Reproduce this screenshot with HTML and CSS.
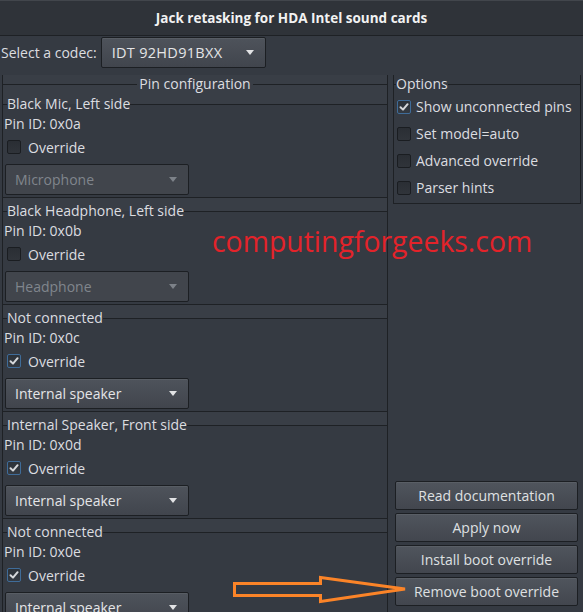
FILE: index.html
```html
<!DOCTYPE html>
<html>
<head>
<meta charset="utf-8">
<title>Jack retasking for HDA Intel sound cards</title>
<link rel="stylesheet" href="styles.css">
</head>
<body>
<div class="window">
  <header class="titlebar"><span class="title">Jack retasking for HDA Intel sound cards</span></header>

  <div class="codec-row">
    <span class="codec-label">Select a codec:</span>
    <div class="combo combo-codec"><span class="combo-text">IDT 92HD91BXX</span><span class="arrow"></span></div>
  </div>

  <div class="main">
    <section class="frame pins">
      <div class="frame-head centered"><span class="frame-label">Pin configuration</span></div>
      <div class="pin-list">
        <div class="pin">
          <div class="frame-head"><span class="frame-label">Black Mic, Left side</span></div>
          <div class="pin-id">Pin ID: 0x0a</div>
          <div class="check-row"><span class="check"></span><span>Override</span></div>
          <div class="combo combo-pin disabled"><span class="combo-text">Microphone</span><span class="arrow"></span></div>
        </div>
        <div class="pin">
          <div class="frame-head"><span class="frame-label">Black Headphone, Left side</span></div>
          <div class="pin-id">Pin ID: 0x0b</div>
          <div class="check-row"><span class="check"></span><span>Override</span></div>
          <div class="combo combo-pin disabled"><span class="combo-text">Headphone</span><span class="arrow"></span></div>
        </div>
        <div class="pin">
          <div class="frame-head"><span class="frame-label">Not connected</span></div>
          <div class="pin-id">Pin ID: 0x0c</div>
          <div class="check-row"><span class="check checked"><svg viewBox="0 0 12 12"><path d="M2.5 6.2 L5 8.6 L9.6 3.2"/></svg></span><span>Override</span></div>
          <div class="combo combo-pin"><span class="combo-text">Internal speaker</span><span class="arrow"></span></div>
        </div>
        <div class="pin">
          <div class="frame-head"><span class="frame-label">Internal Speaker, Front side</span></div>
          <div class="pin-id">Pin ID: 0x0d</div>
          <div class="check-row"><span class="check checked"><svg viewBox="0 0 12 12"><path d="M2.5 6.2 L5 8.6 L9.6 3.2"/></svg></span><span>Override</span></div>
          <div class="combo combo-pin"><span class="combo-text">Internal speaker</span><span class="arrow"></span></div>
        </div>
        <div class="pin">
          <div class="frame-head"><span class="frame-label">Not connected</span></div>
          <div class="pin-id">Pin ID: 0x0e</div>
          <div class="check-row"><span class="check checked"><svg viewBox="0 0 12 12"><path d="M2.5 6.2 L5 8.6 L9.6 3.2"/></svg></span><span>Override</span></div>
          <div class="combo combo-pin"><span class="combo-text">Internal speaker</span><span class="arrow"></span></div>
        </div>
      </div>
    </section>

    <aside class="side">
      <section class="frame options">
        <div class="frame-head short"><span class="frame-label">Options</span></div>
        <div class="opt-row"><span class="check checked"><svg viewBox="0 0 12 12"><path d="M2.5 6.2 L5 8.6 L9.6 3.2"/></svg></span><span>Show unconnected pins</span></div>
        <div class="opt-row"><span class="check"></span><span>Set model=auto</span></div>
        <div class="opt-row"><span class="check"></span><span>Advanced override</span></div>
        <div class="opt-row"><span class="check"></span><span>Parser hints</span></div>
      </section>
      <div class="buttons">
        <div class="button">Read documentation</div>
        <div class="button">Apply now</div>
        <div class="button">Install boot override</div>
        <div class="button">Remove boot override</div>
      </div>
    </aside>
  </div>

  <div class="watermark">computingforgeeks.com</div>
  <svg class="callout" viewBox="0 0 180 36" width="180" height="36">
    <polygon points="4.5,11.5 90.5,11.5 90.5,5.5 175,17 90.5,29.5 90.5,23.5 4.5,23.5"/>
  </svg>
</div>
</body>
</html>
```

FILE: styles.css
```css
* { box-sizing: border-box; }

html, body {
  margin: 0;
  padding: 0;
}

body {
  width: 583px;
  height: 612px;
  overflow: hidden;
  background: #353a42;
  font-family: "Open Sans", "Noto Sans", sans-serif;
  font-size: 14px;
  color: #dcdde0;
}

.window {
  position: relative;
  width: 583px;
  height: 612px;
  overflow: hidden;
}

/* title bar */
.titlebar {
  height: 36px;
  background: #2f3339;
  border-top: 1px solid #42464c;
  border-bottom: 1px solid #1e2125;
  display: flex;
  align-items: center;
  justify-content: center;
}

.title {
  font-weight: 700;
  font-size: 13.5px;
  color: #f2f2f2;
}

/* codec selector */
.codec-row {
  display: flex;
  align-items: center;
  gap: 4px;
  padding-left: 1px;
  margin-top: 1px;
  height: 31px;
}

.combo {
  display: flex;
  align-items: center;
  justify-content: space-between;
  height: 31px;
  border: 1px solid #1c1f23;
  border-radius: 2px;
  background: linear-gradient(#4e535b, #41454d);
  box-shadow: inset 0 1px rgba(255, 255, 255, 0.06);
  color: #e4e5e7;
}

.combo .arrow {
  width: 0;
  height: 0;
  border-left: 4.5px solid transparent;
  border-right: 4.5px solid transparent;
  border-top: 5px solid #e2e3e5;
}

.combo-codec {
  width: 165px;
  padding: 0 11px 0 10px;
  font-size: 14.5px;
  letter-spacing: 0.3px;
}

.combo-pin {
  width: 184px;
  margin: 4px 0 0 2px;
  padding: 0 11px 0 9px;
}

.combo.disabled {
  background: #41454c;
  box-shadow: none;
  color: #80858c;
}

.combo.disabled .arrow {
  border-top-color: #7d8289;
}

/* main layout */
.main {
  display: flex;
  gap: 5px;
  margin-top: 7px;
  height: 537px;
}

.frame {
  border-left: 1px solid #1e2125;
  border-right: 1px solid #1e2125;
}

.frame-head {
  display: flex;
  align-items: center;
  height: 20px;
  line-height: 20px;
}

.frame-head::before,
.frame-head::after {
  content: "";
  border-top: 1px solid #1e2125;
}

.frame-head::before { width: 4px; }
.frame-head::after { flex: 1; }

.frame-head.centered { height: 18px; }
.frame-head.centered::before { flex: 1; width: auto; }
.frame-head.centered .frame-label { padding: 0 2px; }

.frame-label {
  white-space: nowrap;
  color: #dcdde0;
}

/* pin configuration */
.pins {
  margin-left: 2px;
  width: 386px;
  height: 560px;
  background: #393e46;
}

.pin-list {
  display: flex;
  flex-direction: column;
  gap: 3px;
  padding-top: 1px;
}

.pin {
  background: #353a42;
  border-bottom: 1px solid #1e2125;
  padding-bottom: 2px;
}

.pin .frame-head {
  background: linear-gradient(#393e46 50%, #353a42 50%);
}

.pin-id {
  height: 20px;
  line-height: 20px;
  padding-left: 1px;
}

.check-row {
  display: flex;
  align-items: center;
  gap: 7px;
  height: 26px;
  padding-left: 4px;
}

.check {
  flex: none;
  width: 14px;
  height: 14px;
  border: 1px solid #1a1d21;
  border-radius: 2px;
  background: linear-gradient(#2a2e34, #30343a);
  display: flex;
  align-items: center;
  justify-content: center;
}

.check.checked {
  border-color: #3f6c99;
  background: linear-gradient(#2c3239, #343a42);
}

.check svg {
  width: 12px;
  height: 12px;
}

.check path {
  fill: none;
  stroke: #d6d8db;
  stroke-width: 2;
  stroke-linecap: round;
  stroke-linejoin: round;
}

/* right side */
.side {
  width: 188px;
  display: flex;
  flex-direction: column;
  justify-content: space-between;
  padding-bottom: 6px;
}

.options {
  border-bottom: 1px solid #1e2125;
  padding-bottom: 2px;
}

.options .frame-head {
  height: 18px;
}

.options .frame-head::before { width: 2px; }

.opt-row {
  display: flex;
  align-items: center;
  gap: 5px;
  height: 27px;
  padding-left: 3px;
  white-space: nowrap;
}

.buttons {
  display: flex;
  flex-direction: column;
  gap: 3px;
  padding-left: 2px;
}

.button {
  width: 183px;
  height: 29px;
  line-height: 27px;
  text-align: center;
  border: 1px solid #1c1f23;
  border-radius: 2px;
  background: linear-gradient(#50555d, #42464e);
  box-shadow: inset 0 1px rgba(255, 255, 255, 0.06);
  color: #dfe0e2;
}

/* overlays */
.watermark {
  position: absolute;
  left: 212px;
  top: 222px;
  font-family: "Open Sans", sans-serif;
  font-size: 28.4px;
  line-height: 38px;
  color: #e3232a;
  white-space: nowrap;
}

.callout {
  position: absolute;
  left: 230px;
  top: 572px;
  overflow: visible;
}

.callout polygon {
  fill: none;
  stroke: #fb8428;
  stroke-width: 3;
  stroke-linejoin: miter;
}
```
